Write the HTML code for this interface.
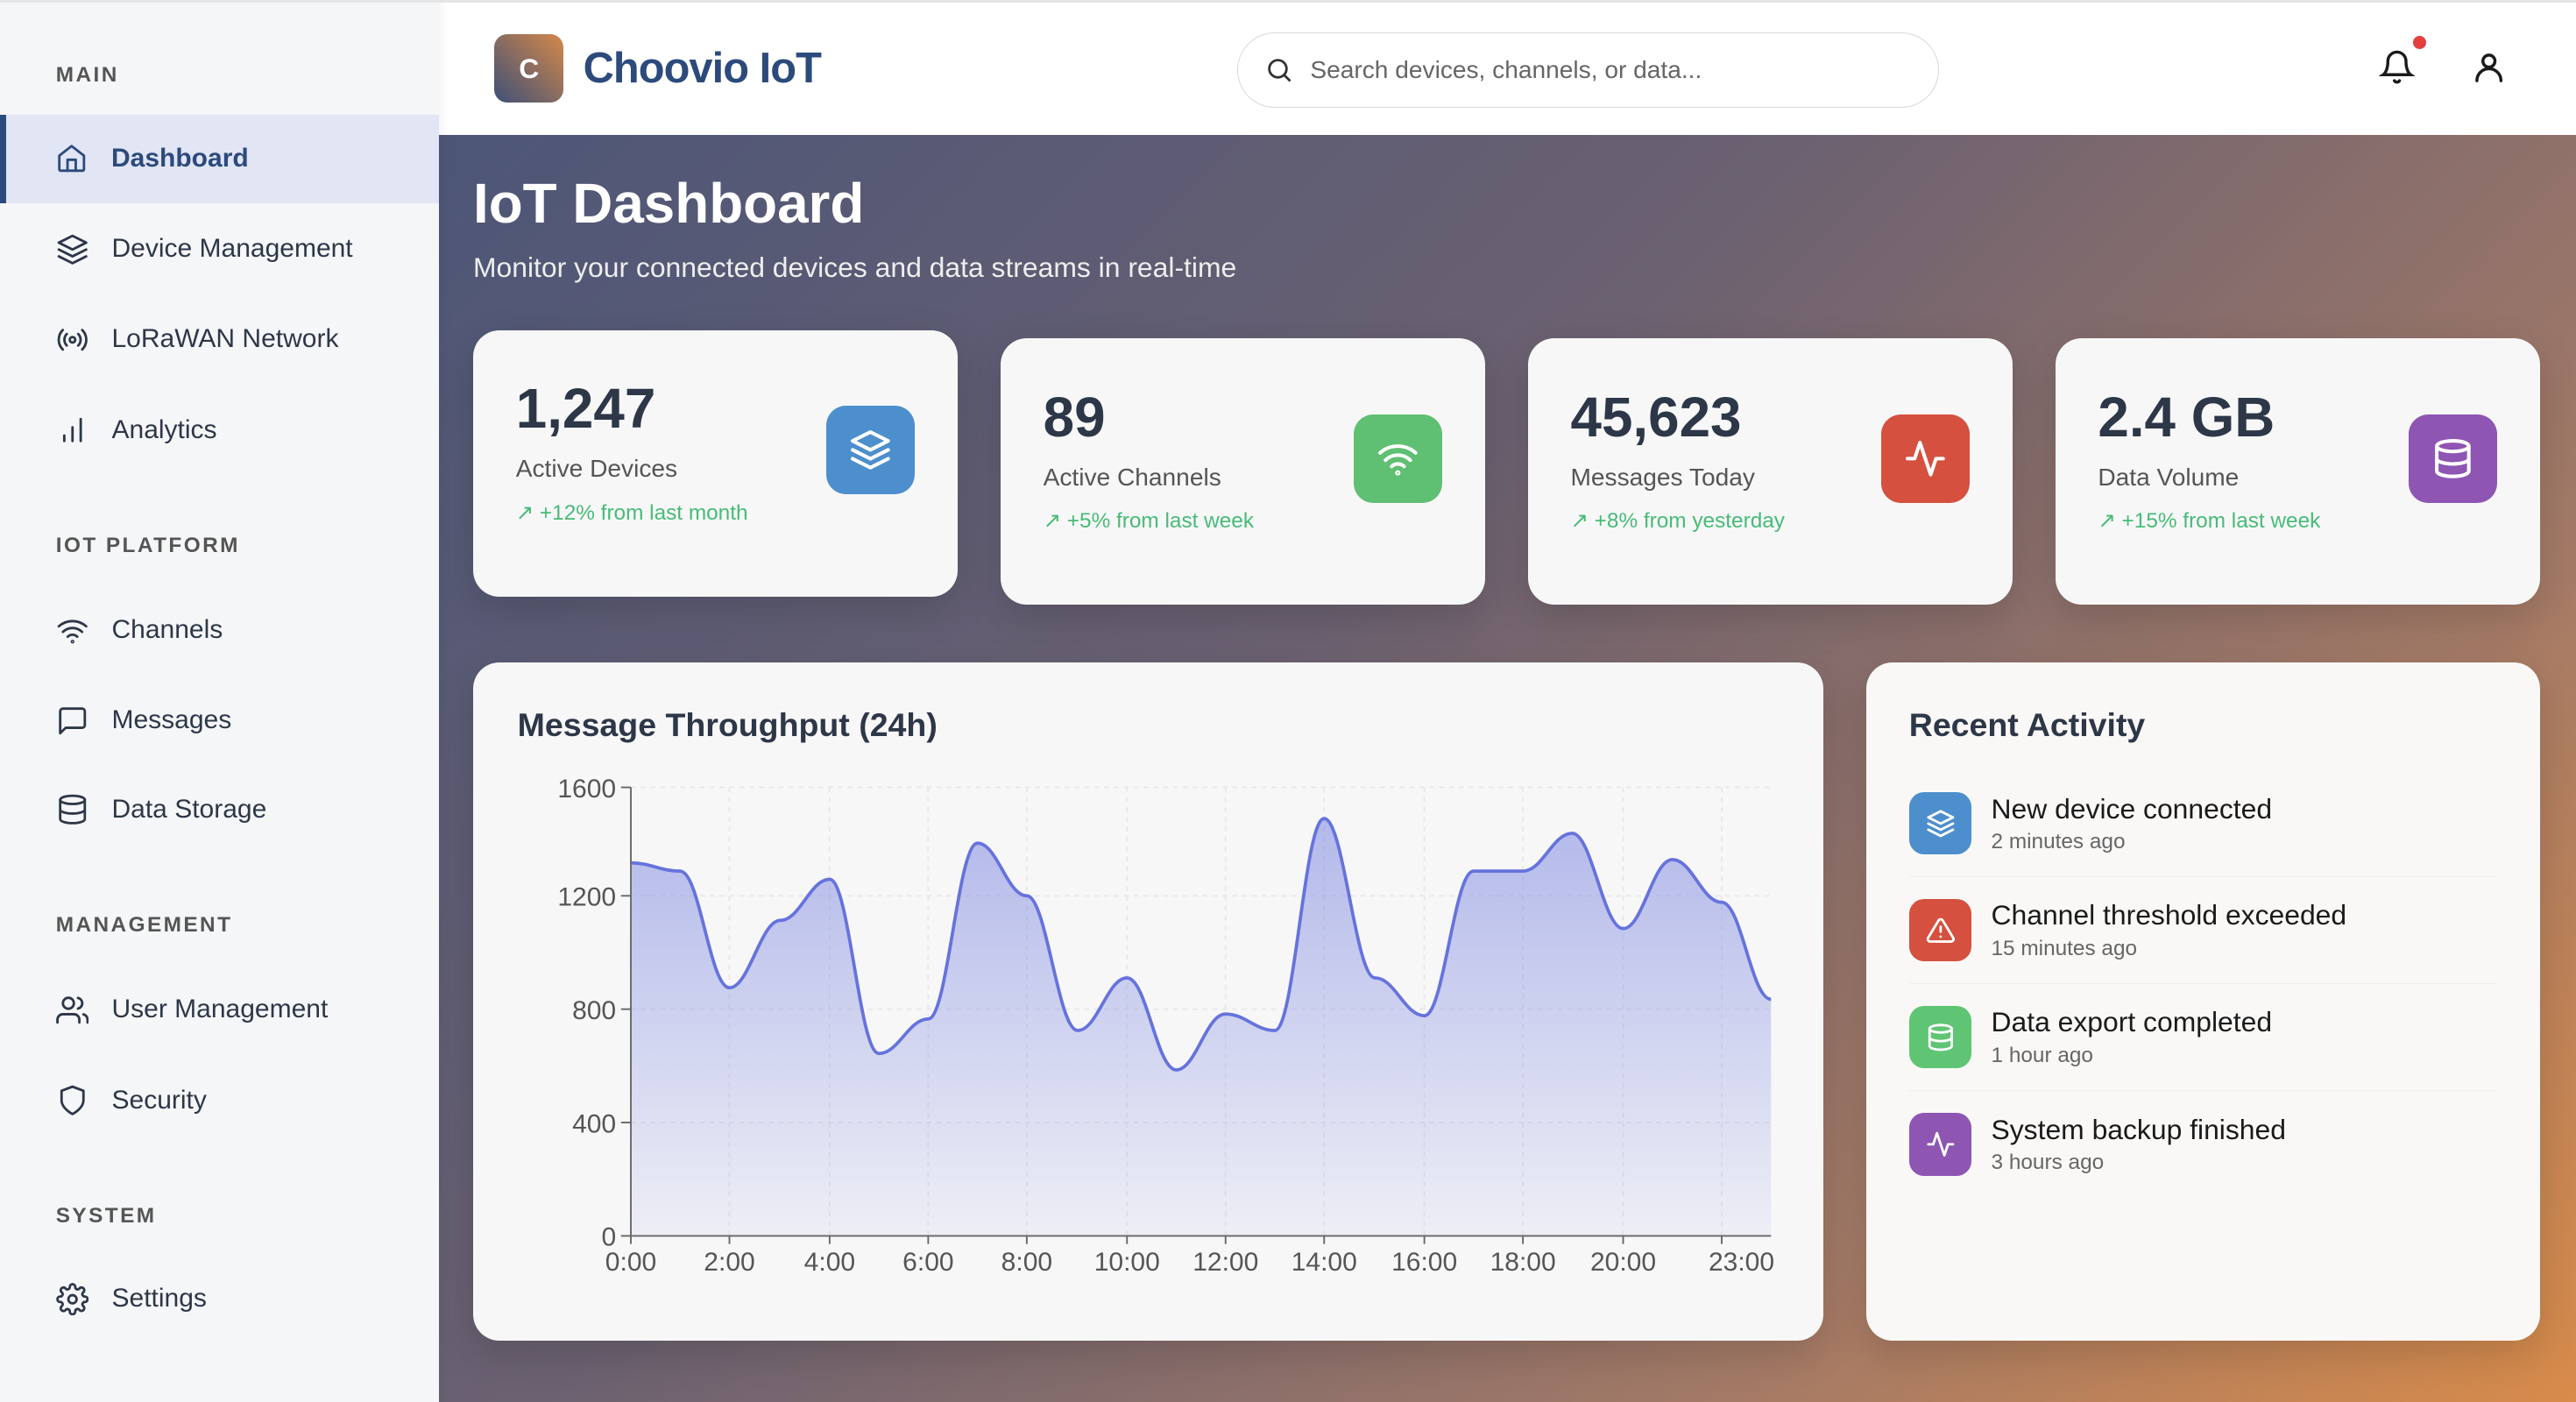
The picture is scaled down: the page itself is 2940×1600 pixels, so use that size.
<!DOCTYPE html>
<html><head><meta charset="utf-8"><style>
*{box-sizing:border-box;margin:0;padding:0}
html,body{width:2940px;height:1600px;overflow:hidden}
body{font-family:"Liberation Sans",sans-serif;background:#fff}
#r{zoom:1.875;width:1568px;height:853.34px;position:relative;overflow:hidden}
.a{position:absolute}
.side{left:0;top:0;width:267px;height:854px;background:#f5f6f8;border-top:2px solid #e6e6e6;box-shadow:2px 0 6px rgba(0,0,0,.05);z-index:2}
.sec{position:absolute;left:34px;font-size:13px;letter-spacing:1.3px;color:#555;font-weight:bold}
.it{position:absolute;left:0;width:267px;height:54px;display:flex;align-items:center;padding-left:34px;font-size:16px;color:#2d3748}
.it svg{width:20px;height:20px;margin-right:14px;fill:none;stroke:#2d3748;stroke-width:1.8;stroke-linecap:round;stroke-linejoin:round}
.act{background:#e1e5f4;color:#2c4a7c;font-weight:bold;border-left:4px solid #2c4a7c;padding-left:30px}
.act svg{stroke:#2c4a7c}
.top{left:267px;top:0;width:1301px;height:82px;background:#fff;border-top:2px solid #e6e6e6}
.main{left:267px;top:82px;width:1301px;height:772px;background:linear-gradient(135deg,#4d5677 0%,#6b6171 40%,#a47a66 75%,#d88b4a 100%)}
.card{position:absolute;background:#f7f7f7;border-radius:16px;box-shadow:0 8px 24px rgba(0,0,0,.15)}
.num{position:absolute;left:26px;font-size:34px;font-weight:bold;color:#2d3748}
.lbl{position:absolute;left:26px;font-size:15px;color:#555}
.tr{position:absolute;left:26px;font-size:13px;color:#48bb78}
.ic{position:absolute;width:54px;height:54px;border-radius:12px;display:flex;align-items:center;justify-content:center}
.ic svg{width:26px;height:26px;fill:none;stroke:#fff;stroke-width:2;stroke-linecap:round;stroke-linejoin:round}
.ra{position:absolute;left:26px;width:358px;height:65px;display:flex;align-items:center;border-bottom:1px solid #eceef0}
.ra .ic{position:static;width:38px;height:38px;border-radius:9px;margin-right:12px}
.ra .ic svg{width:18px;height:18px}
.t1{font-size:17px;color:#1a1a1a}.t2{font-size:13px;color:#666;margin-top:3px}
</style></head><body><div id="r">
<div class="a side">
<div class="sec" style="top:37px">MAIN</div>
<div class="it act" style="top:68px"><svg viewBox="0 0 24 24"><path d="M3 10l9-7 9 7v10a1 1 0 0 1-1 1H4a1 1 0 0 1-1-1z"/><path d="M9 21v-8h6v8"/></svg>Dashboard</div>
<div class="it" style="top:123px"><svg viewBox="0 0 24 24"><path d="M12 2 2 7l10 5 10-5z"/><path d="M2 12l10 5 10-5"/><path d="M2 17l10 5 10-5"/></svg>Device Management</div>
<div class="it" style="top:178px"><svg viewBox="0 0 24 24"><circle cx="12" cy="12" r="2"/><path d="M16.2 7.8a6 6 0 0 1 0 8.4M7.8 16.2a6 6 0 0 1 0-8.4M19.1 4.9a10 10 0 0 1 0 14.2M4.9 19.1a10 10 0 0 1 0-14.2"/></svg>LoRaWAN Network</div>
<div class="it" style="top:233px"><svg viewBox="0 0 24 24"><path d="M18 20V4M12 20V10M6 20v-4"/></svg>Analytics</div>
<div class="sec" style="top:323px">IOT PLATFORM</div>
<div class="it" style="top:355px"><svg viewBox="0 0 24 24"><path d="M2 8.8a15 15 0 0 1 20 0M5 12.9a10 10 0 0 1 14 0M8.5 16.4a5 5 0 0 1 7 0"/><circle cx="12" cy="20" r=".5"/></svg>Channels</div>
<div class="it" style="top:410px"><svg viewBox="0 0 24 24"><path d="M21 15a2 2 0 0 1-2 2H7l-4 4V5a2 2 0 0 1 2-2h14a2 2 0 0 1 2 2z"/></svg>Messages</div>
<div class="it" style="top:464px"><svg viewBox="0 0 24 24"><ellipse cx="12" cy="5" rx="9" ry="3"/><path d="M3 5v14c0 1.7 4 3 9 3s9-1.3 9-3V5M3 12c0 1.7 4 3 9 3s9-1.3 9-3"/></svg>Data Storage</div>
<div class="sec" style="top:554px">MANAGEMENT</div>
<div class="it" style="top:586px"><svg viewBox="0 0 24 24"><circle cx="9" cy="7" r="4"/><path d="M1 21v-2a4 4 0 0 1 4-4h8a4 4 0 0 1 4 4v2M16 3.1a4 4 0 0 1 0 7.8M23 21v-2a4 4 0 0 0-3-3.9"/></svg>User Management</div>
<div class="it" style="top:641px"><svg viewBox="0 0 24 24"><path d="M12 22s8-4 8-10V5l-8-3-8 3v7c0 6 8 10 8 10z"/></svg>Security</div>
<div class="sec" style="top:731px">SYSTEM</div>
<div class="it" style="top:762px"><svg viewBox="0 0 24 24"><circle cx="12" cy="12" r="3"/><path d="M19.4 15a1.7 1.7 0 0 0 .3 1.8l.1.1a2 2 0 1 1-2.8 2.8l-.1-.1a1.7 1.7 0 0 0-2.9 1.2V21a2 2 0 0 1-4 0v-.1a1.7 1.7 0 0 0-2.9-1.2l-.1.1a2 2 0 1 1-2.800-2.8l.1-.1A1.7 1.7 0 0 0 3 14H3a2 2 0 0 1 0-4h.1a1.7 1.7 0 0 0 1.2-2.9l-.1-.1a2 2 0 1 1 2.8-2.8l.1.1A1.7 1.7 0 0 0 10 3V3a2 2 0 0 1 4 0v.1a1.7 1.7 0 0 0 2.9 1.2l.1-.1a2 2 0 1 1 2.8 2.8l-.1.1A1.7 1.7 0 0 0 21 10h0a2 2 0 0 1 0 4h-.1a1.7 1.7 0 0 0-1.5 1z"/></svg>Settings</div>
</div>
<div class="a top">
<div class="a" style="left:34px;top:19px;width:42px;height:42px;border-radius:8px;background:linear-gradient(45deg,#3e5077,#d5884a);color:#fff;font-weight:bold;font-size:17px;display:flex;align-items:center;justify-content:center">C</div>
<div class="a" style="left:88px;top:25px;font-size:26px;font-weight:bold;color:#2c4a7c;letter-spacing:-.5px">Choovio IoT</div>
<div class="a" style="left:486px;top:18px;width:427px;height:46px;border:1px solid #d8d8d8;border-radius:23px;display:flex;align-items:center;padding-left:16px;font-size:15px;color:#666"><svg width="18" height="18" viewBox="0 0 24 24" fill="none" stroke="#333" stroke-width="2" style="margin-right:10px"><circle cx="11" cy="11" r="7"/><path d="M21 21l-5-5"/></svg>Search devices, channels, or data...</div>
<svg class="a" style="left:1181px;top:28px" width="22" height="22" viewBox="0 0 24 24" fill="none" stroke="#1a1a1a" stroke-width="2" stroke-linecap="round"><path d="M18 8a6 6 0 0 0-12 0c0 7-3 9-3 9h18s-3-2-3-9M13.7 21a2 2 0 0 1-3.4 0"/></svg>
<div class="a" style="left:1202px;top:20px;width:8px;height:8px;border-radius:50%;background:#e53e3e"></div>
<svg class="a" style="left:1237px;top:28px" width="22" height="22" viewBox="0 0 24 24" fill="none" stroke="#1a1a1a" stroke-width="2" stroke-linecap="round"><circle cx="12" cy="8" r="4"/><path d="M20 21a8 8 0 0 0-16 0"/></svg>
</div>
<div class="a main"></div>
<div class="a" style="left:288px;top:104px;font-size:34px;font-weight:bold;color:#fff">IoT Dashboard</div>
<div class="a" style="left:288px;top:153px;font-size:17px;color:#eee">Monitor your connected devices and data streams in real-time</div>

<div class="card" style="left:288px;top:201px;width:295px;height:162px">
<div class="num" style="top:28px">1,247</div><div class="lbl" style="top:76px">Active Devices</div><div class="tr" style="top:103px">↗ +12% from last month</div>
<div class="ic" style="left:215px;top:46px;background:#4d8fcc"><svg viewBox="0 0 24 24"><path d="M12 2 2 7l10 5 10-5z"/><path d="M2 12l10 5 10-5"/><path d="M2 17l10 5 10-5"/></svg></div></div>
<div class="card" style="left:609px;top:206px;width:295px;height:162px">
<div class="num" style="top:28px">89</div><div class="lbl" style="top:76px">Active Channels</div><div class="tr" style="top:103px">↗ +5% from last week</div>
<div class="ic" style="left:215px;top:46px;background:#5fbf72"><svg viewBox="0 0 24 24"><path d="M2 8.8a15 15 0 0 1 20 0M5 12.9a10 10 0 0 1 14 0M8.5 16.4a5 5 0 0 1 7 0"/><circle cx="12" cy="20" r=".5"/></svg></div></div>
<div class="card" style="left:930px;top:206px;width:295px;height:162px">
<div class="num" style="top:28px">45,623</div><div class="lbl" style="top:76px">Messages Today</div><div class="tr" style="top:103px">↗ +8% from yesterday</div>
<div class="ic" style="left:215px;top:46px;background:#d5503f"><svg viewBox="0 0 24 24"><path d="M22 12h-4l-3 9L9 3l-3 9H2"/></svg></div></div>
<div class="card" style="left:1251px;top:206px;width:295px;height:162px">
<div class="num" style="top:28px">2.4 GB</div><div class="lbl" style="top:76px">Data Volume</div><div class="tr" style="top:103px">↗ +15% from last week</div>
<div class="ic" style="left:215px;top:46px;background:#8e55b3"><svg viewBox="0 0 24 24"><ellipse cx="12" cy="5" rx="9" ry="3"/><path d="M3 5v14c0 1.7 4 3 9 3s9-1.3 9-3V5M3 12c0 1.7 4 3 9 3s9-1.3 9-3"/></svg></div></div>

<div class="card" style="left:288px;top:403px;width:822px;height:413px">
<div class="a" style="left:27px;top:27px;font-size:20px;font-weight:bold;color:#2d3748">Message Throughput (24h)</div>
<svg class="a" style="left:0;top:0" width="822" height="413" viewBox="288 403 822 413" font-family="Liberation Sans" font-size="16" fill="#555">
<defs><linearGradient id="g" x1="0" y1="0" x2="0" y2="1"><stop offset="0" stop-color="#7b86e0" stop-opacity=".55"/><stop offset="1" stop-color="#7b86e0" stop-opacity=".08"/></linearGradient>
<path id="ln" d="M384,525 C396,525 402,530 414,530 C426,530 432,601 444,601 C456,601 463,560 475,560 C487,560 493,535 505,535 C517,535 523,641 535,641 C547,641 553,620 565,620 C577,620 583,513 595,513 C607,513 613,545 625,545 C637,545 644,627 656,627 C668,627 674,595 686,595 C698,595 704,651 716,651 C728,651 734,617 746,617 C758,617 764,627 776,627 C788,627 794,498 806,498 C818,498 825,595 837,595 C849,595 855,618 867,618 C879,618 885,530 897,530 C909,530 915,530 927,530 C939,530 945,507 957,507 C969,507 976,565 988,565 C1000,565 1006,523 1018,523 C1030,523 1036,549 1048,549 C1060,549 1066,608 1078,608"/></defs>
<g stroke="#e8e8e8" stroke-dasharray="3 3"><path d="M384 479H1078M384 545H1078M384 614H1078M384 683H1078M444 479V752M505 479V752M565 479V752M625 479V752M686 479V752M746 479V752M806 479V752M867 479V752M927 479V752M988 479V752M1048 479V752"/></g>
<path d="M384,525 C396,525 402,530 414,530 C426,530 432,601 444,601 C456,601 463,560 475,560 C487,560 493,535 505,535 C517,535 523,641 535,641 C547,641 553,620 565,620 C577,620 583,513 595,513 C607,513 613,545 625,545 C637,545 644,627 656,627 C668,627 674,595 686,595 C698,595 704,651 716,651 C728,651 734,617 746,617 C758,617 764,627 776,627 C788,627 794,498 806,498 C818,498 825,595 837,595 C849,595 855,618 867,618 C879,618 885,530 897,530 C909,530 915,530 927,530 C939,530 945,507 957,507 C969,507 976,565 988,565 C1000,565 1006,523 1018,523 C1030,523 1036,549 1048,549 C1060,549 1066,608 1078,608 L1078,752 L384,752Z" fill="url(#g)"/>
<use href="#ln" fill="none" stroke="#6673dc" stroke-width="2"/>
<path d="M384 479V752H1078M378 479H384M378 545H384M378 614H384M378 683H384M378 752H384M384 752v5M444 752v5M505 752v5M565 752v5M625 752v5M686 752v5M746 752v5M806 752v5M867 752v5M927 752v5M988 752v5M1048 752v5" stroke="#666" fill="none"/>
<g text-anchor="end"><text x="375" y="485">1600</text><text x="375" y="551">1200</text><text x="375" y="620">800</text><text x="375" y="689">400</text><text x="375" y="758">0</text></g>
<g text-anchor="middle"><text x="384" y="773">0:00</text><text x="444" y="773">2:00</text><text x="505" y="773">4:00</text><text x="565" y="773">6:00</text><text x="625" y="773">8:00</text><text x="686" y="773">10:00</text><text x="746" y="773">12:00</text><text x="806" y="773">14:00</text><text x="867" y="773">16:00</text><text x="927" y="773">18:00</text><text x="988" y="773">20:00</text><text x="1060" y="773">23:00</text></g>
</svg></div>

<div class="card" style="left:1136px;top:403px;width:410px;height:413px;background:#faf8f6">
<div class="a" style="left:26px;top:27px;font-size:20px;font-weight:bold;color:#2d3748">Recent Activity</div>
<div class="ra" style="top:66px"><div class="ic" style="background:#4d8fcc"><svg viewBox="0 0 24 24"><path d="M12 2 2 7l10 5 10-5z"/><path d="M2 12l10 5 10-5"/><path d="M2 17l10 5 10-5"/></svg></div><div><div class="t1">New device connected</div><div class="t2">2 minutes ago</div></div></div>
<div class="ra" style="top:131px"><div class="ic" style="background:#d5503f"><svg viewBox="0 0 24 24"><path d="M10.3 3.9 1.8 18a2 2 0 0 0 1.7 3h17a2 2 0 0 0 1.7-3L13.7 3.9a2 2 0 0 0-3.4 0zM12 9v4M12 17h0"/></svg></div><div><div class="t1">Channel threshold exceeded</div><div class="t2">15 minutes ago</div></div></div>
<div class="ra" style="top:196px"><div class="ic" style="background:#5fc575"><svg viewBox="0 0 24 24"><ellipse cx="12" cy="5" rx="9" ry="3"/><path d="M3 5v14c0 1.7 4 3 9 3s9-1.3 9-3V5M3 12c0 1.7 4 3 9 3s9-1.3 9-3"/></svg></div><div><div class="t1">Data export completed</div><div class="t2">1 hour ago</div></div></div>
<div class="ra" style="top:261px;border:none"><div class="ic" style="background:#8e55b3"><svg viewBox="0 0 24 24"><path d="M22 12h-4l-3 9L9 3l-3 9H2"/></svg></div><div><div class="t1">System backup finished</div><div class="t2">3 hours ago</div></div></div>
</div>
</div></body></html>
